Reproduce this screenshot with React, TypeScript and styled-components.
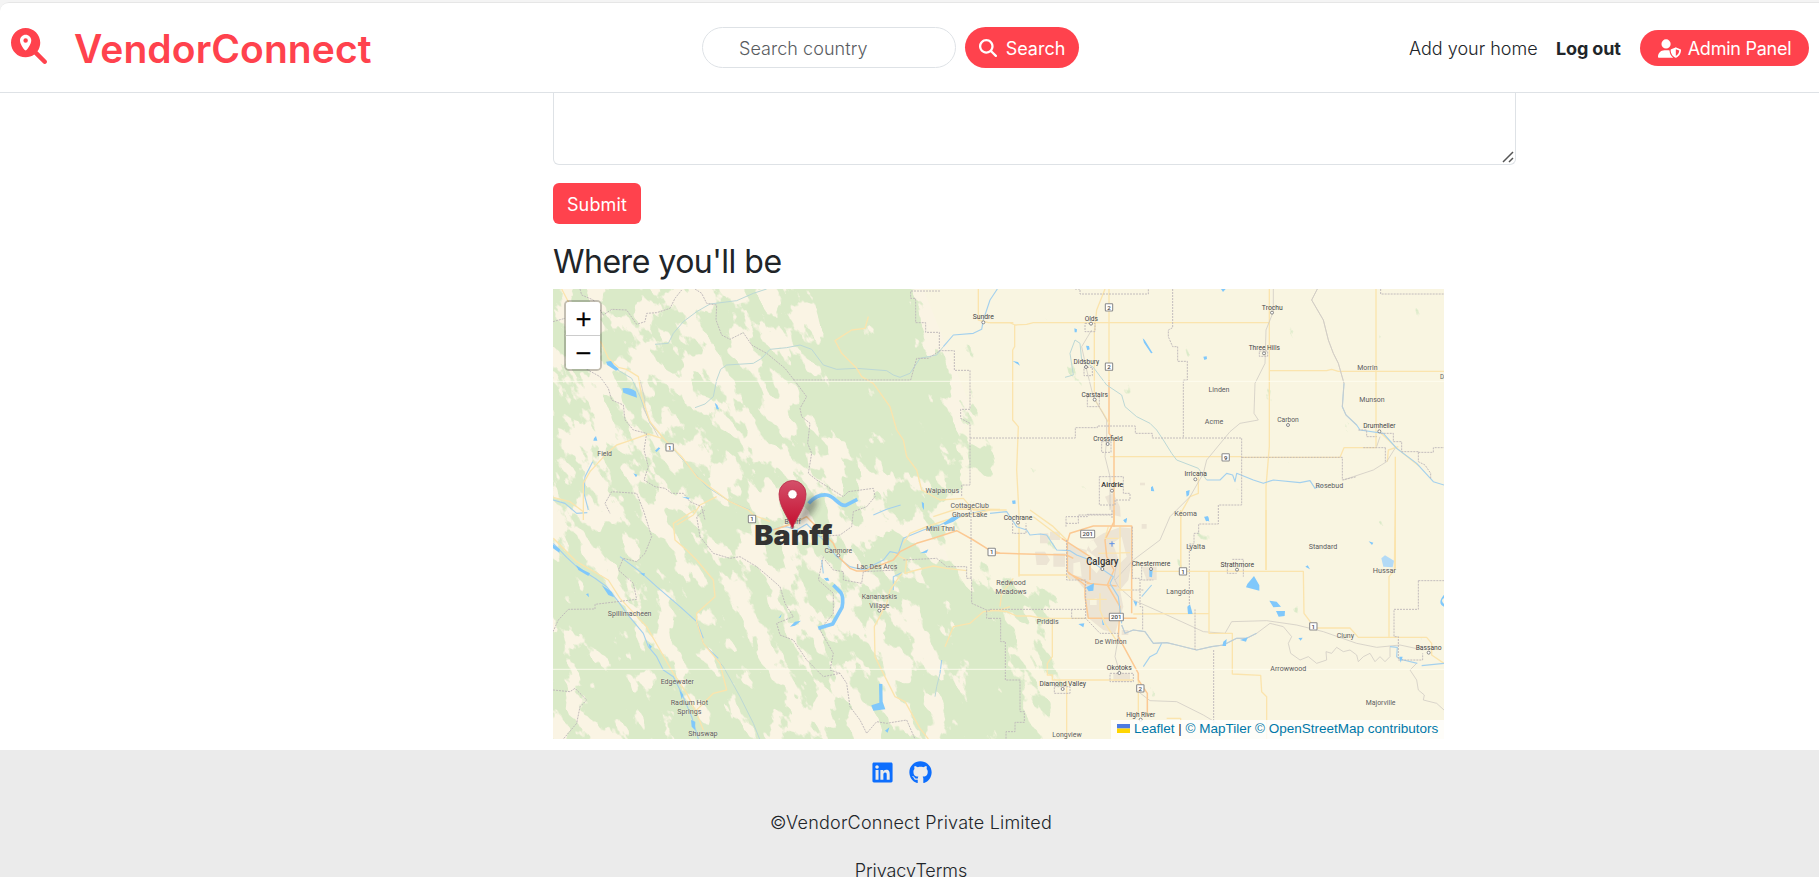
import React from 'react';
import styled, { createGlobalStyle } from 'styled-components';
import { FaMagnifyingGlassLocation, FaMagnifyingGlass, FaUserShield, FaLinkedin, FaGithub } from 'react-icons/fa6';

const GlobalStyle = createGlobalStyle`
  *, *::before, *::after { box-sizing: border-box; }
  body {
    margin: 0;
    background: #f4f4f4;
    color: #212529;
    font: 300 18px/27px Inter, "Open Sans", sans-serif;
    overflow: hidden;
  }
`;

const accent = '#ff424d';

const Page = styled.div`
  height: 100vh;
  padding-top: 2px;
  display: flex;
  flex-direction: column;
  overflow: hidden;
`;

const Sheet = styled.div`
  flex: 1;
  min-height: 0;
  display: flex;
  flex-direction: column;
  background: #fff;
  border-top: 1px solid #e6e6e6;
  border-top-left-radius: 9px;
  overflow: hidden;
`;

const Header = styled.header`
  flex: none;
  height: 90px;
  display: flex;
  align-items: center;
  padding: 0 10px 0 11px;
  border-bottom: 1px solid #dee2e6;
`;

const LogoMark = styled.span`
  display: flex;
  width: 63px;
  color: ${accent};
  font-size: 36px;
  margin-top: -4px;
`;

const Brand = styled.span`
  width: 628px;
  color: ${accent};
  font-size: 39px;
  font-weight: 600;
  letter-spacing: 0.1px;
  line-height: 48px;
  margin-top: 3px;
  white-space: nowrap;
`;

const SearchForm = styled.form`
  display: flex;
  gap: 9px;
`;

const SearchInput = styled.input`
  width: 254px;
  height: 41px;
  padding: 2px 36px 0;
  border: 1px solid #dee2e6;
  border-radius: 21px;
  font: inherit;
  letter-spacing: 0.05px;
  &::placeholder { color: #595c5f; opacity: 1; }
`;

const Button = styled.button<{ $w: number; $h: number; $round?: boolean; $gap?: number; $track?: number }>`
  width: ${p => p.$w}px;
  height: ${p => p.$h}px;
  display: flex;
  align-items: center;
  justify-content: center;
  gap: ${p => p.$gap ?? 0}px;
  padding: 1px 0 0;
  border: 0;
  border-radius: ${p => (p.$round ? p.$h / 2 : 6)}px;
  background: ${accent};
  color: #fff;
  font: inherit;
  font-weight: 400;
  letter-spacing: ${p => p.$track ?? 0}px;
  white-space: nowrap;
`;

const Nav = styled.nav`
  margin-left: auto;
  display: flex;
  align-items: center;
  gap: 19px;
`;

const NavLink = styled.a<{ $w: number; $bold?: boolean; $track: number }>`
  width: ${p => p.$w}px;
  padding-top: 2px;
  font-weight: ${p => (p.$bold ? 700 : 300)};
  letter-spacing: ${p => p.$track}px;
  white-space: nowrap;
`;

const Main = styled.main`
  flex: none;
  height: 657px;
  width: 963px;
  margin-left: 553px;
  display: flex;
  flex-direction: column;
  align-items: flex-start;
`;

const ReviewField = styled.div`
  flex: none;
  position: relative;
  margin-bottom: 18px;
`;

const Review = styled.textarea`
  display: block;
  width: 963px;
  height: 72px;
  border: 1px solid #dee2e6;
  border-top: 0;
  border-radius: 0 0 6px 6px;
  resize: none;
`;

const Grip = styled.svg`
  position: absolute;
  right: 2px;
  bottom: 2px;
`;

const Title = styled.h3`
  margin: 18px 0 8px;
  font-size: 32px;
  font-weight: 400;
  line-height: 39px;
  letter-spacing: -0.5px;
`;

const MapBox = styled.div`
  position: relative;
  width: 891px;
  height: 450px;
  overflow: hidden;
  background: #f9f5e1;
`;

const MapSvg = styled.svg`
  display: block;
  width: 891px;
  height: 450px;
  font-family: Roboto, sans-serif;
`;

const ZoomBar = styled.div`
  position: absolute;
  top: 11px;
  left: 11px;
  width: 38px;
  border: 2px solid rgba(0, 0, 0, 0.22);
  border-radius: 5px;
  background-clip: padding-box;
  overflow: hidden;
`;

const ZoomButton = styled.button`
  display: flex;
  align-items: center;
  justify-content: center;
  width: 34px;
  height: 33px;
  padding: 2px 0 0 1px;
  border: 0;
  background: #fff;
  color: #000;
  font: 400 21px/31px "DejaVu Sans", sans-serif;
  -webkit-text-stroke: 0.4px #000;
  & + & { height: 34px; border-top: 1px solid #ccc; }
`;

const Attribution = styled.div`
  position: absolute;
  right: 0;
  bottom: 0;
  width: 333px;
  height: 19px;
  padding: 0 0 2px 6px;
  display: flex;
  align-items: center;
  background: rgba(255, 255, 255, 0.8);
  color: #333;
  font: 400 13.5px/17px "Liberation Sans", Arial, sans-serif;
  white-space: pre;
  a { color: #0078a8; }
  svg { margin-right: 4px; }
`;

const Footer = styled.footer`
  flex: none;
  height: 160px;
  background: #ebebeb;
  display: flex;
  flex-direction: column;
  align-items: center;
`;

const Social = styled.div`
  display: flex;
  gap: 15px;
  align-items: center;
  height: 24px;
  margin: 10px 17px 25px 0;
  color: #0d6efd;
  font-size: 23px;
`;

const FootLine = styled.p<{ $track: number }>`
  margin: 0 0 21px;
  padding-left: 3px;
  letter-spacing: ${p => p.$track}px;
  line-height: 27px;
`;

type Kind = 'yellow' | 'orange' | 'border' | 'river' | 'stream' | 'rail' | 'lake' | 'wide';

const strokes: Record<Exclude<Kind, 'lake'>, { stroke: string; strokeWidth: number; strokeDasharray?: string }> = {
  yellow: { stroke: '#fbe4ad', strokeWidth: 4 },
  orange: { stroke: '#fcc993', strokeWidth: 4.5 },
  border: { stroke: '#bdb7b9', strokeWidth: 2.8, strokeDasharray: '6 3' },
  river: { stroke: '#a3d0ee', strokeWidth: 3.4 },
  stream: { stroke: '#bcd8d6', strokeWidth: 3 },
  rail: { stroke: '#d0ccc4', strokeWidth: 2.4 },
  wide: { stroke: '#80c8fb', strokeWidth: 11 },
};

// Map units are a third of a pixel. Each sheet has its own origin.
const sheets: { dx: number; dy: number; lines: [Kind, string][] }[] = [
  {
    dx: 0, dy: 0,
    lines: [
      ['stream', 'M345 193L385 190L400 160L430 125L470 95L510 72L590 62L640 40L680 27'],
      ['stream', 'M465 383L495 372L520 350L530 300L542 268L560 255L640 250L665 235L690 208L740 203L780 195L815 208L850 255L890 268L950 265L1040 272L1060 285L1080 292L1110 280L1140 235L1190 225L1210 200'],
      ['river', 'M1210 200L1240 165L1300 160L1325 148L1330 120L1350 60L1372 27'],
      ['stream', 'M230 268L275 295L300 350L330 430L380 485L420 530L500 620L570 665L630 690'],
      ['river', 'M158 545L135 590L132 640L145 690M39 660L75 670L110 700L142 698'],
      ['river', 'M1000 705L1040 688L1082 675'],
      ['rail', 'M300 300L315 360L310 385L330 425L355 470'],
      ['yellow', 'M65 27L90 75L185 190L205 235L235 262L260 268L295 290L305 350L330 425L375 480L425 530L470 590L515 625L570 665L625 690L640 705L690 725'],
      ['yellow', 'M130 720V610L150 575L200 520L230 495L260 485L325 462L365 475'],
      ['yellow', 'M39 652L90 665L130 695'],
      ['yellow', 'M985 110L975 145L935 150L885 182L905 220L950 265L965 290L1000 310L1050 380L1070 450L1090 480L1100 530L1130 570L1145 630L1200 660L1270 655L1300 690L1400 690'],
      ['yellow', 'M530 650L480 675L460 705L410 735'],
      ['yellow', 'M1315 27V120L1345 128H1420'],
      ['border', 'M120 27L125 45L160 60L190 105L215 88L260 90L290 133L315 125L320 100L350 98L390 85L405 55L425 30'],
      ['border', 'M465 27L485 40L500 70L530 75L528 120L545 165L570 178L610 158L635 195L680 220L735 265L770 310L800 350L780 385L785 410L810 430L803 490L815 520L805 580L830 600L870 625L910 650L925 635L1000 625L1005 650L980 680L940 695L935 740L900 765L840 770'],
      ['border', 'M1200 33H1112V55H1127V128H1157V157H1198V212H1243V271H1290V388H1262V415L1290 430V615H1265V650'],
      ['border', 'M760 300H1112L1130 235L1165 235L1200 212M1290 474H1350'],
      ['border', 'M140 268L180 290L205 325L215 360L250 375L255 420L280 450L320 460L312 510L325 560L312 600L345 620L375 625L395 640L430 640L450 665L485 680L495 720'],
      ['border', 'M39 125L75 115'],
      ['lake', 'M247 325Q270 320 288 335L291 353L270 346L250 338ZM198 245L213 243L222 255L237 268L228 272L202 255ZM524 368L532 375L537 388L530 388ZM162 475L168 468L172 482H160ZM345 512L356 502L361 505L350 516ZM280 580L292 584L288 592ZM425 650L450 653L445 658ZM1145 665L1152 670V690L1147 682Z'],
      ['wide', 'M806 670Q830 642 860 645C885 647 895 680 917 676L952 658'],
    ],
  },
  {
    dx: 1350, dy: 0,
    lines: [
      ['yellow', 'M60 128L75 135L110 133L130 128H838M0 128H60M74 135V200L68 210V420L85 440L80 570L87 700V890'],
      ['yellow', 'M313 155V340M838 27V500L828 620V870M838 272H1010L1025 268L1045 274H1362M1158 27V500'],
      ['yellow', 'M360 530H755M755 532H1050L1062 503H1160M625 590V640L600 650L572 700V870M1216 530V870M1168 455L1195 480L1220 505L1290 560'],
      ['yellow', 'M357 27V300M1192 545L1195 510L1225 500'],
      ['orange', 'M357 300V460L372 480V740'],
      ['yellow', 'M345 27L320 90L313 155M315 360L340 400L357 430'],
      ['rail', 'M850 27V95L828 150L825 250L795 310L792 400L805 420L750 430L720 455L650 540L640 580L600 650L540 710L510 780L430 840L375 900M305 150L275 200L290 270L310 350L350 420V480L345 530L360 590V690M1170 470L1160 500'],
      ['stream', 'M225 292L250 285L240 220L255 180L270 190L275 240L310 262L350 315L395 345L405 380L440 410L480 430L500 450L520 480L545 520L560 540L625 565L650 600'],
      ['river', 'M650 600L690 600L710 580L728 585L735 605L740 580L790 600L820 610L850 600L930 608L960 602L975 625L1000 615'],
      ['rail', 'M982 27L965 60L1000 120L1015 180L1030 220L1045 250L1062 310M1060 600L1090 590L1150 570L1190 545L1215 505'],
      ['river', 'M1062 310L1057 380L1068 405L1100 435L1110 450L1180 460L1220 505L1280 550L1330 605L1362 615'],
      ['rail', 'M982 27L965 60L1000 120L1015 180L1030 220L1045 250L1062 310L1057 380L1068 405L1100 435'],
      ['border', 'M255 27H270V42H475V27M548 27V143L535 150V170L548 200H563V244H592V300H580V474'],
      ['border', 'M0 474H256V443H322V438H436V460H487V474H755V675H685V732H626V760H612V792H598V990M755 532H1057V600L1100 590'],
      ['border', 'M1172 27V42H1362M1186 503V545M1105 450H1130V470H1160M1285 517V545L1305 555L1322 580V595M1285 517H1330V503H1362M1172 460H1210V485H1235V515H1285M1120 503H1186'],
      ['border', 'M328 590H400V640H420V660H375V675H328ZM285 130H315V155H285Z'],
      ['border', 'M335 485H363V517H335ZM292 350H328V380H292ZM282 262H307V287H282ZM808 213H833V229H808ZM228 740V710H292V703H366V715'],
      ['lake', 'M253 145L261 148L260 157H254ZM288 197L297 198L299 208L292 211ZM458 175L464 180L488 219L483 220L462 188ZM640 230L650 229L651 237L643 240ZM68 243L84 246L90 257ZM693 27H707L699 36ZM483 622L488 618L493 634L483 633ZM588 634L599 630L597 645L590 650ZM66 662L76 661L77 671L68 672ZM643 712L653 708L657 722L648 724ZM400 722L411 714L409 728Z'],
    ],
  },
  {
    dx: 0, dy: 690,
    lines: [
      ['river', 'M40 100L80 142L110 170L165 205L200 230L235 275L260 310L310 370L325 410L350 440L370 480L400 500L425 550L455 620L475 687'],
      ['stream', 'M470 335L490 400L550 470L600 560L640 640L660 690'],
      ['river', 'M240 140L300 185L350 230L420 290L470 335L490 385M500 412L535 445'],
      ['river', 'M690 62L720 52L740 50L770 60L800 42L850 90L890 140L930 170L970 180L1030 150L1050 125L1075 130L1090 85L1150 60L1200 45L1250 20L1340 0M845 150L850 190'],
      ['river', 'M1060 240V200L1085 188M1205 450L1200 490'],
      ['stream', 'M1200 490L1190 530L1185 560'],
      ['yellow', 'M465 0L400 40L405 90L440 120L470 150L520 210L525 260L470 310L470 335L490 400L540 460L560 540L520 550L480 590L460 610'],
      ['yellow', 'M40 85L110 155L205 210L240 265L320 350L360 420L400 490L440 550L470 610L490 660'],
      ['yellow', 'M1060 130L1100 150L1095 190L1130 180L1180 168L1220 175L1280 182M1085 190L1050 240L1040 280L1003 350L1005 440L1030 490L1065 560L1095 575L1120 620L1140 655L1165 687M1410 290L1380 300L1330 305L1290 340L1240 350L1215 410'],
      ['yellow', 'M1090 100L1110 70L1160 50L1220 30L1350 0M1180 20L1250 -3L1380 -2'],
      ['orange', 'M700 60L760 40L800 20L830 50L850 70L880 100L900 145L930 175L950 183H975L1060 150L1080 125L1130 100L1180 85L1250 62L1300 90L1345 118L1380 130'],
      ['border', 'M480 80L520 130L570 145L600 140L650 170L680 195L720 230L735 280L760 320L710 340L720 375L760 390L800 450L850 500L900 490L920 520L930 590L960 630L980 670L1010 635L1040 640L1100 630L1125 687'],
      ['border', 'M850 140L835 210L880 250V310L840 360L880 430L870 480L900 490M855 150L880 180L910 185V210L965 220L970 185L1070 180M1090 150L1190 145L1220 170H1280V205H1295V280L1340 300H1350M1293 0V205M1350 325H1340V300'],
      ['border', 'M39 365L55 330L85 298L165 297V283L290 268L280 220L235 180L250 145L290 155L315 130L335 80L310 0L290 -50L215 -55L195 -20L210 10'],
      ['border', 'M39 540L90 545L105 535L140 570L120 590L110 640L70 687M480 80L470 20L495 0'],
      ['lake', 'M39 103L60 118L58 128L39 115ZM108 165L130 180L150 190L145 198L115 180ZM185 225L215 245L222 262L205 255ZM715 325L725 312L722 322ZM750 350L765 335L783 332L765 347ZM1017 521L1027 522L1028 575L1036 598L1000 602L994 586L1018 578ZM1210 40L1235 22L1265 18L1240 35L1215 45ZM1140 130L1165 118L1160 128ZM852 205L864 203L868 212L858 212ZM138 253L145 250L147 262ZM300 190L315 190L312 198ZM453 630L466 635L465 660L455 650ZM325 400L336 410L330 416ZM418 540L430 555L425 568ZM1035 662L1048 652L1043 668Z'],
      ['wide', 'M880 225L902 247Q912 262 906 292L878 342L835 355'],
    ],
  },
  {
    dx: 1350, dy: 690,
    lines: [
      ['rail', 'M430 270L520 310L640 365L705 370L725 335L830 332L920 345L1000 365L1100 400L1160 412L1230 405L1300 420M445 545L480 572L560 575L640 615L690 645M378 170L372 205L385 230L430 270M385 380L375 440L390 490'],
      ['yellow', 'M487 184H657V370H727V492L812 496L815 545L830 560V687M657 184H940L942 310L975 354H1080L1105 382H1310L1325 400V435L1362 460M430 312L657 310M87 70V195H230L240 208M0 300L50 305L80 318H120L160 325H290M187 330V440L172 460V495H187V510H430M230 515V687M1216 0L1213 180L1197 200V380M828 0V180M30 290L35 250L70 205'],
      ['yellow', 'M120 0L190 50L230 90M445 490V620M530 625H572V640M572 0V184M345 85L355 50M390 50V240M325 130L420 128'],
      ['orange', 'M0 130H40L230 135M215 85L300 140L300 210M232 95L240 70L310 48H425V310M232 95V185L285 225V260L295 325H440M230 135L250 145M372 0V35L345 90L350 140L372 180L352 225L390 290L385 380L445 490V510L472 550V620M290 220L380 228M235 190L300 220'],
      ['yellow', 'M130 20L215 85M345 85H385M330 250V300L345 340L385 400M290 268H350M380 240H425'],
      ['river', 'M0 10L50 5L80 50L110 60L120 75L150 72L170 75L200 120L240 122L260 135L300 150L340 180L370 200L360 220L385 260L395 340M460 470L480 440L500 430L515 400M455 260L485 225'],
      ['river', 'M395 345L405 370L430 360L465 365L490 400L530 398L560 405L620 420L665 410L700 405L740 385L770 385L800 370'],
      ['rail', 'M395 345L405 370L430 360L465 365L490 400L530 398L560 405L620 420L665 410L700 405L740 385L770 385L800 370L840 340L880 350L905 380L895 400L902 430L930 450L955 440L980 460L1010 450L1008 425L1025 430L1040 412L1060 425L1080 420L1100 435L1105 455L1120 440L1140 430L1155 455L1170 440L1185 455L1200 440L1200 410M1280 460L1260 480L1280 510L1285 540L1303 555L1300 570L1340 580L1362 600'],
      ['river', 'M1200 410L1222 412L1220 440L1240 450L1282 460M1295 467L1362 460'],
      ['border', 'M0 298H287M245 298V325H287M0 325H32V395H46V510H90V605H103V637H75V665H48V687M230 90V210H287V325L330 370H385V395M427 50V205H450V290H458V360M427 240H460M615 298V420M671 420V640M1285 212H1362M1285 212V298H1212V380H1225V450H1298V430M360 490H430V515H360ZM193 530H240V550H193ZM727 148H760V200M712 160V190H740M455 170V210H490M228 40H265V15H366V0M68 30V70H108V40'],
      ['lake', 'M288 232L312 220L310 242L296 244ZM400 30L411 24L406 40ZM642 20L655 20L658 36ZM592 290L600 283L608 312H594ZM772 222L792 198L808 226V242L768 232ZM838 272L860 275L873 290L850 292ZM858 303L885 303L884 318L866 320ZM946 170L953 166L960 178ZM1136 94L1150 98L1146 105ZM265 342L283 340L280 352ZM700 395L710 387L708 408L697 408ZM478 180L488 178L486 202L478 200ZM430 272L442 276L438 290ZM750 390L773 382L768 395ZM925 384L938 383L932 392ZM1228 440L1238 440L1232 458ZM335 325L343 345L338 345ZM1362 254V264Q1350 272 1362 282V290Q1340 280 1362 254Z'],
    ],
  },
];

type Place = { t: string; x: number; y: number; w: number; s?: number; dot?: [number, number]; c?: string };

const town = '#444';

const places: Place[] = [
  { t: 'Sundre', x: 1330, y: 117, w: 64, dot: [1330, 127], c: town },
  { t: 'Field', x: 194, y: 529, w: 44 },
  { t: 'Waiparous', x: 1207, y: 640, w: 101 },
  { t: 'CottageClub', x: 1289, y: 685, w: 115 },
  { t: 'Ghost Lake', x: 1289, y: 712, w: 106 },
  { t: 'Olds', x: 1654, y: 122, w: 40, dot: [1653, 131], c: town },
  { t: 'Trochu', x: 2197, y: 89, w: 63, dot: [2196, 98], c: town },
  { t: 'Three Hills', x: 2173, y: 211, w: 94, dot: [2172, 220], c: town },
  { t: 'Didsbury', x: 1639, y: 253, w: 77, dot: [1638, 261], c: town },
  { t: 'Carstairs', x: 1664, y: 350, w: 79, dot: [1664, 359], c: town },
  { t: 'Morrin', x: 2482, y: 269, w: 61 },
  { t: 'Linden', x: 2037, y: 337, w: 63 },
  { t: 'Munson', x: 2496, y: 366, w: 76 },
  { t: 'Acme', x: 2022, y: 432, w: 55 },
  { t: 'Carbon', x: 2244, y: 426, w: 65, dot: [2244, 435] },
  { t: 'Drumheller', x: 2518, y: 445, w: 97, dot: [2518, 454], c: town },
  { t: 'Crossfield', x: 1704, y: 484, w: 88, dot: [1703, 492], c: town },
  { t: 'Irricana', x: 1967, y: 588, w: 67, dot: [1966, 598], c: town },
  { t: 'Airdrie', x: 1717, y: 621, w: 66, s: 24, dot: [1716, 632], c: '#2e2e2e' },
  { t: 'Rosebud', x: 2368, y: 624, w: 83 },
  { t: 'Keoma', x: 1937, y: 707, w: 68 },
  { t: 'D', x: 2706, y: 297, w: 12 },
  { t: 'Banff', x: 758, y: 731, w: 49, dot: [757, 741] },
  { t: 'Cochrane', x: 1434, y: 719, w: 86, dot: [1434, 728], c: town },
  { t: 'Mini Thni', x: 1201, y: 752, w: 86 },
  { t: 'Canmore', x: 895, y: 818, w: 83, dot: [895, 826] },
  { t: 'Lac Des Arcs', x: 1011, y: 866, w: 122 },
  { t: 'Kananaskis', x: 1018, y: 958, w: 106 },
  { t: 'Village', x: 1018, y: 984, w: 60, dot: [1018, 992] },
  { t: 'Spillimacheen', x: 269, y: 1008, w: 131 },
  { t: 'Edgewater', x: 412, y: 1211, w: 100 },
  { t: 'Radium Hot', x: 448, y: 1275, w: 112 },
  { t: 'Springs', x: 448, y: 1301, w: 72 },
  { t: 'Shuswap', x: 489, y: 1367, w: 88 },
  { t: 'Redwood', x: 1413, y: 914, w: 88 },
  { t: 'Meadows', x: 1413, y: 941, w: 93 },
  { t: 'Calgary', x: 1687, y: 854, w: 97, s: 30, dot: [1687, 867], c: '#333' },
  { t: 'Chestermere', x: 1833, y: 858, w: 116, dot: [1833, 867], c: town },
  { t: 'Strathmore', x: 2092, y: 860, w: 101, dot: [2091, 869], c: town },
  { t: 'Lyalta', x: 1967, y: 808, w: 57 },
  { t: 'Standard', x: 2349, y: 808, w: 86 },
  { t: 'Hussar', x: 2533, y: 878, w: 70 },
  { t: 'Langdon', x: 1920, y: 943, w: 82 },
  { t: 'Priddis', x: 1523, y: 1031, w: 66 },
  { t: 'De Winton', x: 1712, y: 1091, w: 95 },
  { t: 'Okotoks', x: 1738, y: 1170, w: 75, dot: [1738, 1179], c: town },
  { t: 'Diamond Valley', x: 1568, y: 1218, w: 139, dot: [1568, 1227], c: town },
  { t: 'High River', x: 1802, y: 1311, w: 87, dot: [1802, 1319], c: town },
  { t: 'Longview', x: 1581, y: 1372, w: 88 },
  { t: 'Cluny', x: 2416, y: 1074, w: 52 },
  { t: 'Bassano', x: 2666, y: 1109, w: 78, dot: [2666, 1118], c: town },
  { t: 'Arrowwood', x: 2245, y: 1173, w: 108 },
  { t: 'Majorville', x: 2522, y: 1275, w: 89 },
];

const shields: [string, number, number][] = [
  ['1', 389, 502], ['1', 636, 717], ['2', 1707, 82], ['2', 1707, 260], ['9', 2057, 532], ['1', 1355, 816],
  ['201', 1643, 762], ['1', 1929, 874], ['201', 1729, 1011], ['1', 2320, 1039], ['2', 1801, 1225],
];

const MapArt = () => (
  <MapSvg viewBox="39 27 2673 1350">
    <defs>
      <filter id="soft" filterUnits="userSpaceOnUse" x="-200" y="-200" width="3200" height="1900">
        <feGaussianBlur stdDeviation="30" />
      </filter>
      <filter id="ridges" filterUnits="userSpaceOnUse" x="-800" y="-2600" width="4600" height="4400" colorInterpolationFilters="sRGB">
        <feTurbulence type="fractalNoise" baseFrequency="0.0095 0.019" numOctaves={6} seed={7} result="n" />
        <feComposite in="n" in2="SourceGraphic" operator="arithmetic" k1={0} k2={1} k3={0.85} k4={-0.33} />
        <feColorMatrix values="0 0 0 0 0.855  0 0 0 0 0.918  0 0 0 0 0.784  0 0 0 18 -9" />
      </filter>
      <filter id="shade" x="-50%" y="-50%" width="200%" height="200%"><feGaussianBlur stdDeviation="9" /></filter>
      <linearGradient id="pin" x1="0" y1="0" x2="0" y2="1">
        <stop offset="0" stopColor="#d4506a" />
        <stop offset="1" stopColor="#c40d2e" />
      </linearGradient>
    </defs>
    <rect x="39" y="27" width="2673" height="1350" fill="#f9f5e1" />
    <path d="M39 27H1150L1300 400L1150 640L1250 900L1330 1377H39Z" fill="#faf4e4" />
    <g transform="rotate(62)">
      <g filter="url(#ridges)">
        <g transform="rotate(-62)">
          <g filter="url(#soft)">
            <path d="M-60 -60H1130L1180 180L1290 300L1390 540L1260 640L1220 720L1290 880L1400 940L1600 980L1500 1060L1560 1200L1500 1450H-60Z" opacity="0.42" />
            <path d="M760 -60H1140L1120 190L1200 290L1230 500L1150 600L1060 560L850 420L800 310L900 220Z" opacity="0.6" />
            <path d="M1080 870L1280 900L1380 1020L1450 1450H1300L1260 1050Z" opacity="0.75" />
            <path d="M-60 800L200 920L420 1180L600 1450H300L160 1250L-60 1100Z" opacity="0.28" />
            <path d="M330 760L560 980L640 1200L760 1450H600L440 1100L300 860Z" opacity="0.28" />
            <path d="M280 460L520 620L680 800L620 830L420 700Z" opacity="0.22" />
            <path d="M1290 870L1500 910L1620 970L1600 990H1300Z" opacity="0.3" />
          </g>
        </g>
      </g>
    </g>
    <g fill="#ece4d4">
      <path d="M1582 782L1600 800L1640 810L1650 785L1690 760L1740 742L1772 745V860L1765 900L1740 930L1750 980L1725 1060L1690 1050L1640 1010L1636 930L1610 900L1582 895Z" />
      <path d="M1695 650L1720 640L1740 680L1742 710L1720 705ZM1500 760H1525V790H1500ZM1530 755H1560V780H1530ZM1485 815H1515L1530 840L1520 855H1490ZM1540 820H1575V860H1540ZM1805 860H1850V900H1820ZM1720 1180H1770V1205H1720ZM1800 608H1815V616H1800ZM1805 732H1820V746H1805ZM1745 1050H1765V1065H1745Z" />
    </g>
    <g fill="#f8f4e0"><path d="M1640 790L1660 780L1672 800L1655 815ZM1640 810L1690 850L1670 880L1640 850ZM1718 790L1745 770L1760 830L1740 850ZM1600 850L1620 845L1625 890L1600 885ZM1650 960L1670 955V975H1650Z" /></g>
    {sheets.map((s, i) => (
      <g key={i} transform={`translate(${s.dx} ${s.dy})`}>
        {s.lines.map(([k, d], j) =>
          k === 'lake'
            ? <path key={j} d={d} fill="#80c8fb" />
            : <path key={j} d={d} fill="none" strokeLinejoin="round" {...strokes[k]} />
        )}
      </g>
    ))}
    <path d="M2524 835L2535 826L2562 842L2558 862L2530 860Z" fill="#b3daf6" />
    <path d="M1716 784V800M1708 791H1724" stroke="#5a8fe8" strokeWidth="3" />
    <path d="M39 304H2712M39 1168H2712" stroke="#fffef2" strokeWidth="3" opacity="0.8" />
    {shields.map(([t, x, y], i) => (
      <g key={i}>
        <rect x={x - (t.length > 1 ? 21 : 11)} y={y - 11} width={t.length > 1 ? 42 : 22} height="22" rx="2" fill="#fff" stroke="#8b8b8b" strokeWidth="3.2" />
        <text x={x} y={y + 7} fontSize="18.5" fill="#444" fontWeight="500" textAnchor="middle">{t}</text>
      </g>
    ))}
    {places.map((p, i) => (
      <g key={i}>
        {p.dot && <circle cx={p.dot[0]} cy={p.dot[1]} r="4.5" fill="#fff" stroke="#777" strokeWidth="2.6" />}
        <text x={p.x} y={p.y} fontSize={p.s ?? 22} fill={p.c ?? '#5c5c5c'} textAnchor="middle" textLength={p.w} lengthAdjust="spacingAndGlyphs" stroke="#fbf8ea" strokeWidth="2" strokeOpacity="0.5" paintOrder="stroke" fontWeight={p.s ? 500 : 400}>{p.t}</text>
      </g>
    ))}
    <path d="M764 740L800 660Q832 640 832 668Q825 705 764 740Z" fill="#222" opacity="0.4" filter="url(#shade)" />
    <path d="M757 745C745 712 717 680 717 642A40.500 40.500 0 0 1 798 642C798 680 769 712 757 745Z" fill="url(#pin)" stroke="#b8304a" strokeWidth="2.500" />
    <circle cx="757.500" cy="643" r="14" fill="#fff" stroke="#b52742" strokeWidth="2" />
    <text x="760" y="795" fontFamily="Inter, sans-serif" fontWeight="900" fontSize="83" fill="#333" textAnchor="middle" textLength="234" lengthAdjust="spacingAndGlyphs">Banff</text>
  </MapSvg>
);

export default function App() {
  return (
    <Page>
      <GlobalStyle />
      <Sheet>
        <Header>
          <LogoMark><FaMagnifyingGlassLocation /></LogoMark>
          <Brand>VendorConnect</Brand>
          <SearchForm>
            <SearchInput placeholder="Search country" />
            <Button type="button" $w={114} $h={41} $round $gap={9}><FaMagnifyingGlass size={18} />Search</Button>
          </SearchForm>
          <Nav>
            <NavLink $w={128} $track={0}>Add your home</NavLink>
            <NavLink $w={65} $bold $track={-0.15}>Log out</NavLink>
            <Button type="button" $w={169} $h={36} $round $gap={7} $track={-0.25}><FaUserShield size={23} />Admin Panel</Button>
          </Nav>
        </Header>
        <Main>
          <ReviewField>
            <Review />
            <Grip width="12" height="12" viewBox="0 0 12 12"><path d="M1 11L11 1M7 11L11 7" stroke="#555" strokeWidth="1.500" /></Grip>
          </ReviewField>
          <Button type="button" $w={88} $h={41} $track={0.15}>Submit</Button>
          <Title>Where you'll be</Title>
          <MapBox>
            <MapArt />
            <ZoomBar>
              <ZoomButton>+</ZoomButton>
              <ZoomButton>−</ZoomButton>
            </ZoomBar>
            <Attribution>
              <svg width="13" height="9" viewBox="0 0 13 9"><path fill="#4c7be1" d="M0 0h13v4.500H0z" /><path fill="#ffd500" d="M0 4.500h13V9H0z" /></svg>
              <span><a>Leaflet</a> | <a>© MapTiler</a> <a>© OpenStreetMap contributors</a></span>
            </Attribution>
          </MapBox>
        </Main>
        <Footer>
          <Social><FaLinkedin /><FaGithub /></Social>
          <FootLine $track={0.22}>©VendorConnect Private Limited</FootLine>
          <FootLine $track={-0.05}>PrivacyTerms</FootLine>
        </Footer>
      </Sheet>
    </Page>
  );
}
